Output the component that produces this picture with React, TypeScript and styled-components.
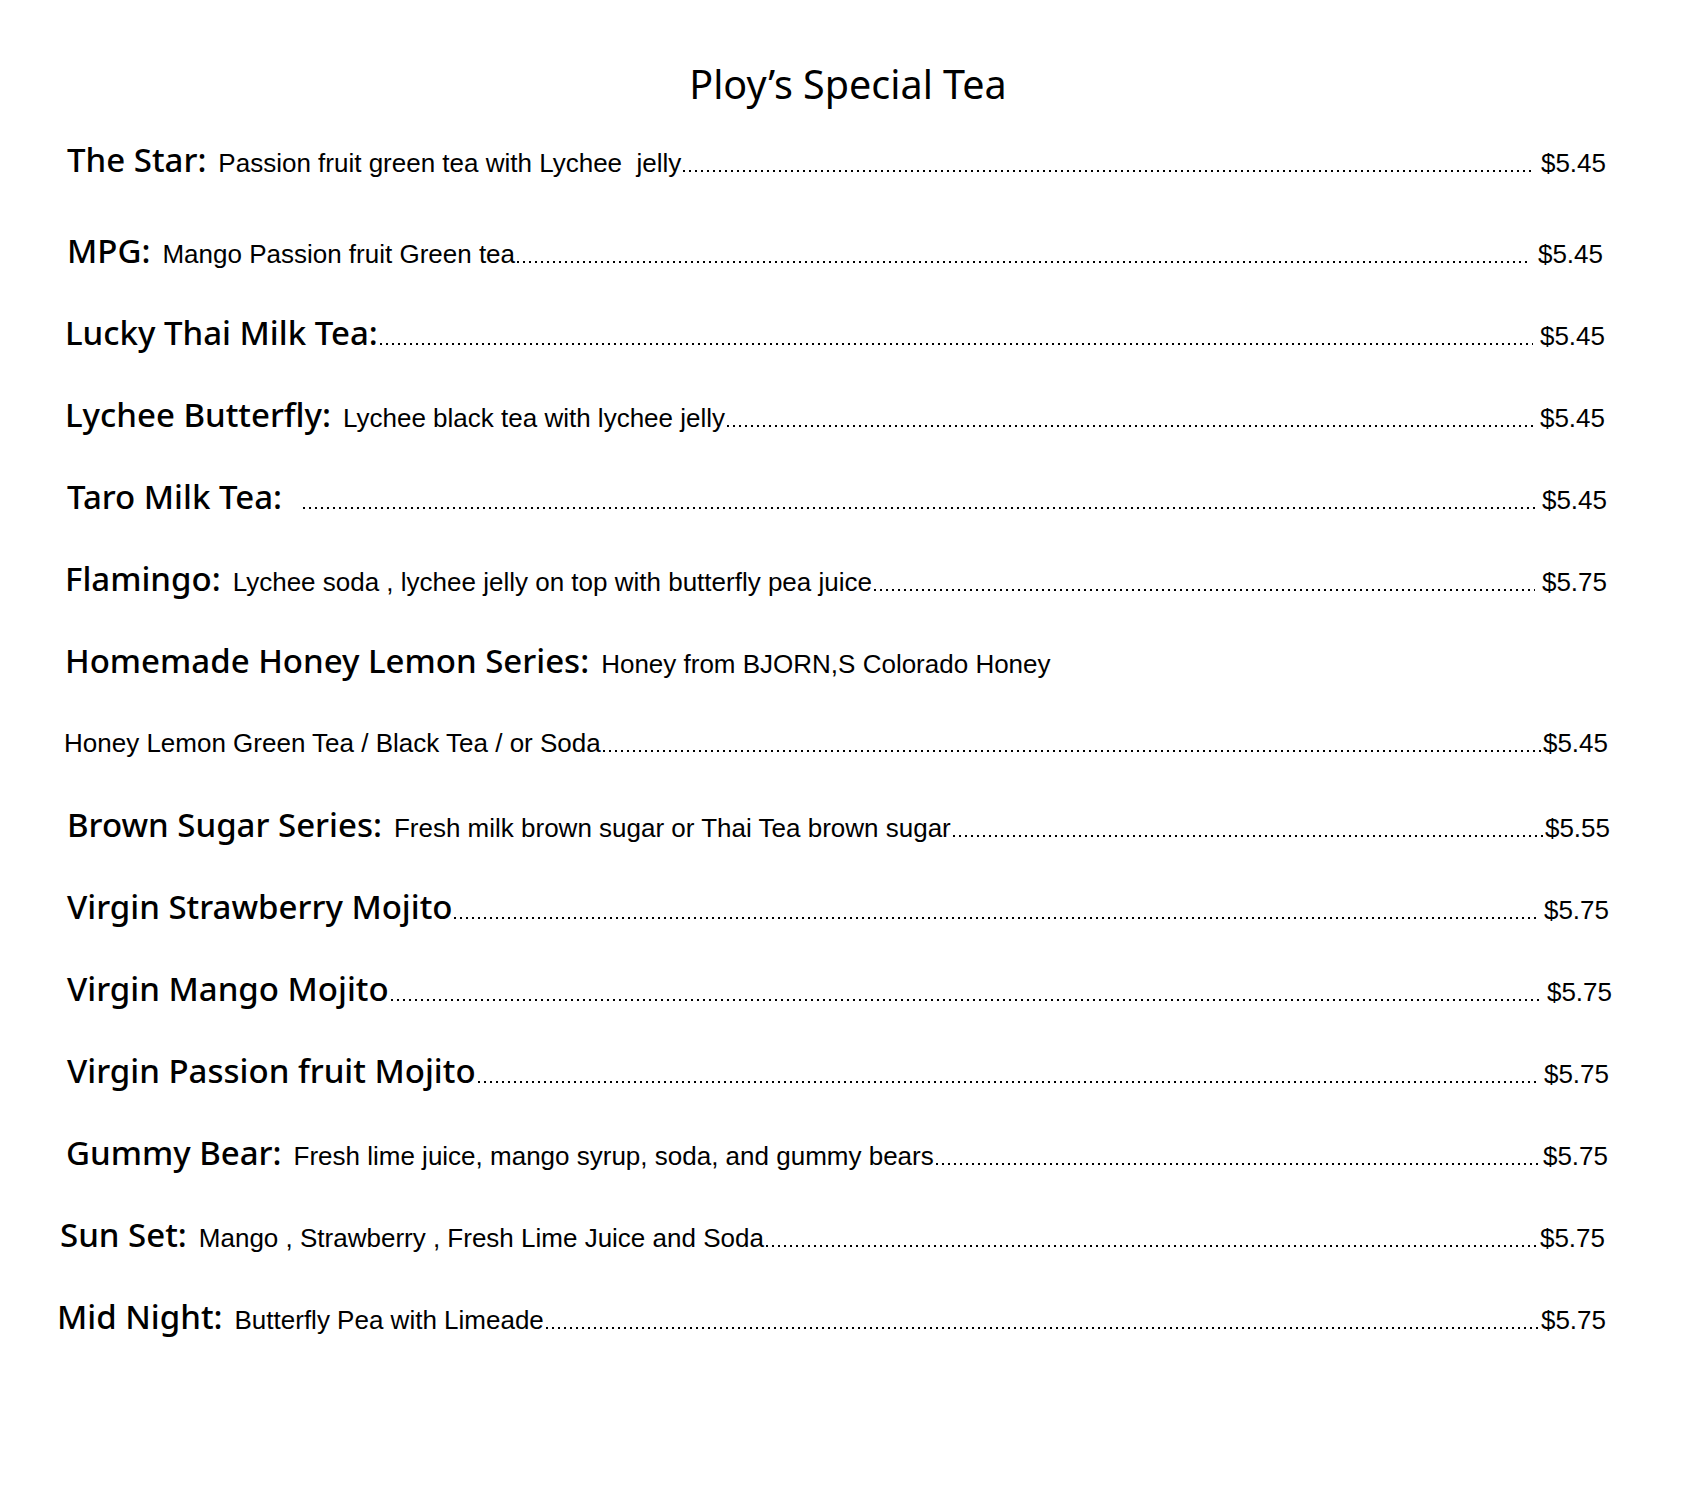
import styled, { createGlobalStyle } from "styled-components";

const GlobalStyle = createGlobalStyle`
  html, body {
    margin: 0;
    padding: 0;
    background: #ffffff;
  }
`;

type Item = {
  name: string;
  desc?: string;
  price?: string;
  gap?: boolean;
  shift?: number;
  nudge?: number;
  tall?: boolean;
};

// nudge = how far the price sits right (+) or left (-) of the common edge
const items: Item[] = [
  { name: "The Star:", desc: "Passion fruit green tea with Lychee  jelly", price: "$5.45", gap: true, tall: true },
  { name: "MPG:", desc: "Mango Passion fruit Green tea", price: "$5.45", gap: true, nudge: -3 },
  { name: "Lucky Thai Milk Tea:", price: "$5.45", gap: true, shift: -2, nudge: -1 },
  { name: "Lychee Butterfly:", desc: "Lychee black tea with lychee jelly", price: "$5.45", gap: true, shift: -2, nudge: -1 },
  { name: "Taro Milk Tea:", desc: " ", price: "$5.45", gap: true, nudge: 1 },
  { name: "Flamingo:", desc: "Lychee soda , lychee jelly on top with butterfly pea juice", price: "$5.75", gap: true, shift: -2, nudge: 1 },
  { name: "Homemade Honey Lemon Series:", desc: "Honey from BJORN,S Colorado Honey", shift: -2 },
  { name: "", desc: "Honey Lemon Green Tea / Black Tea / or Soda", price: "$5.45", shift: -3, nudge: 2 },
  { name: "Brown Sugar Series:", desc: "Fresh milk brown sugar or Thai Tea brown sugar", price: "$5.55", nudge: 4 },
  { name: "Virgin Strawberry Mojito", price: "$5.75", gap: true, nudge: 3 },
  { name: "Virgin Mango Mojito", price: "$5.75", gap: true, nudge: 6 },
  { name: "Virgin Passion fruit Mojito", price: "$5.75", gap: true, nudge: 3 },
  { name: "Gummy Bear:", desc: "Fresh lime juice, mango syrup, soda, and gummy bears", price: "$5.75", shift: -1, nudge: 2 },
  { name: "Sun Set:", desc: "Mango , Strawberry , Fresh Lime Juice and Soda", price: "$5.75", shift: -7, nudge: -1 },
  { name: "Mid Night:", desc: "Butterfly Pea with Limeade", price: "$5.75", shift: -10 },
];

export default function App() {
  return (
    <>
      <GlobalStyle />
      <Page>
        <Title>Ploy’s Special Tea</Title>
        <List>
          {items.map((it, i) => (
            <Row key={i} $tall={it.tall} $shift={it.shift ?? 0} $nudge={it.nudge ?? 0}>
              {it.name && <Name>{it.name}</Name>}
              {it.desc && <Desc $after={!!it.name}>{it.desc}</Desc>}
              {it.price && (
                <>
                  <Leader />
                  <Price $gap={it.gap}>{it.price}</Price>
                </>
              )}
            </Row>
          ))}
        </List>
      </Page>
    </>
  );
}

const Page = styled.div`
  width: 1696px;
  min-height: 1501px;
  background: #ffffff;
  color: #000000;
  padding-top: 62px;
  box-sizing: border-box;
`;

const Title = styled.h1`
  margin: 0 0 13px;
  text-align: center;
  font-family: "Comic Sans MS", "Noto Sans", sans-serif;
  font-weight: 400;
  font-size: 39.5px;
  line-height: 44px;
`;

const List = styled.div`
  display: flex;
  flex-direction: column;
  padding: 0 90px 0 67px;
`;

const Row = styled.div<{ $tall?: boolean; $shift: number; $nudge: number }>`
  display: flex;
  align-items: baseline;
  height: ${(p) => (p.$tall ? 91 : 82)}px;
  line-height: 82px;
  margin-left: ${(p) => p.$shift}px;
  margin-right: ${(p) => -p.$nudge}px;
  white-space: pre;
`;

const Name = styled.span`
  flex: none;
  font-family: "Comic Sans MS", "Noto Sans", sans-serif;
  font-size: 33px;
  font-weight: 500;
`;

const Desc = styled.span<{ $after?: boolean }>`
  flex: none;
  margin-left: ${(p) => (p.$after ? 12 : 0)}px;
  font-family: "Liberation Sans Narrow", "Liberation Sans", Arial, sans-serif;
  font-size: 26px;
`;

const Leader = styled.span`
  flex: 1 1 0;
  min-width: 0;
  height: 2px;
  margin-bottom: -1px;
  background-image: linear-gradient(90deg, #000 2px, transparent 2px);
  background-size: 6px 2px;
  background-repeat: repeat-x;
  background-position: 2px 0;
`;

const Price = styled.span<{ $gap?: boolean }>`
  flex: none;
  margin-left: ${(p) => (p.$gap ? 7 : 1)}px;
  font-family: "Liberation Sans Narrow", "Liberation Sans", Arial, sans-serif;
  font-size: 26px;
`;
